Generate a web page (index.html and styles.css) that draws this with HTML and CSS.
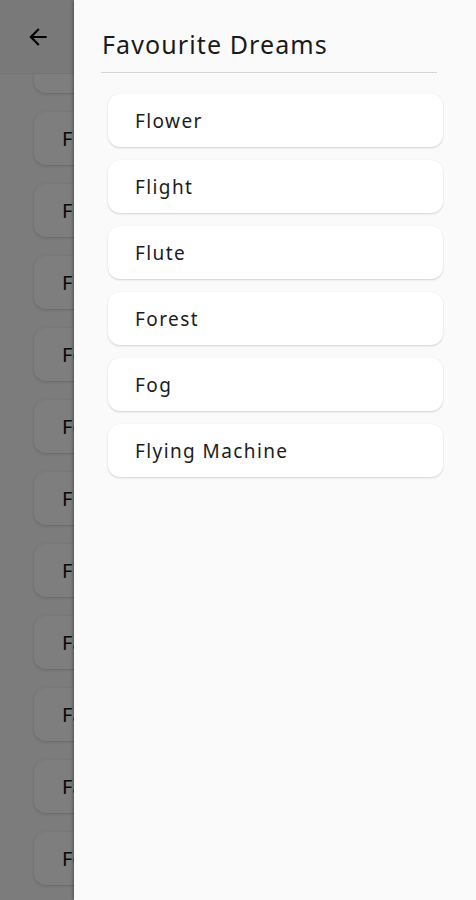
FILE: index.html
```html
<!DOCTYPE html>
<html>
<head>
<meta charset="utf-8">
<link rel="stylesheet" href="styles.css">
</head>
<body>
<div class="app">
  <header class="appbar">
    <button class="back" aria-label="Back">
      <svg width="24" height="24" viewBox="0 0 24 24"><path d="M20 11H7.83l5.59-5.59L12 4l-8 8 8 8 1.41-1.41L7.83 13H20v-2z" fill="#000"/></svg>
    </button>
  </header>
  <main class="list">
    <div class="bg-card first"></div>
    <div class="bg-card">Flower</div>
    <div class="bg-card">Flight</div>
    <div class="bg-card">Flute</div>
    <div class="bg-card">Forest</div>
    <div class="bg-card">Fog</div>
    <div class="bg-card">Flying Machine</div>
    <div class="bg-card">Fire</div>
    <div class="bg-card">Family</div>
    <div class="bg-card">Falling</div>
    <div class="bg-card">Fame</div>
    <div class="bg-card">Fear</div>
  </main>
</div>
<div class="scrim"></div>
<aside class="drawer">
  <h1 class="title">Favourite Dreams</h1>
  <div class="divider"></div>
  <ul class="favs">
    <li class="fav">Flower</li>
    <li class="fav">Flight</li>
    <li class="fav">Flute</li>
    <li class="fav">Forest</li>
    <li class="fav">Fog</li>
    <li class="fav">Flying Machine</li>
  </ul>
</aside>
</body>
</html>
```
FILE: styles.css
```css
html, body {
  margin: 0;
  padding: 0;
}
body {
  width: 476px;
  height: 900px;
  overflow: hidden;
  position: relative;
  background: #f8f8f8;
  font-family: "Noto Sans", "Lato", sans-serif;
  color: #111;
}
.app {
  display: flex;
  flex-direction: column;
  height: 900px;
}
.appbar {
  height: 73px;
  flex: none;
  display: flex;
  align-items: center;
  padding-left: 20px;
  background: #f2f2f2;
  border-bottom: 1px solid #e6e6e6;
  position: relative;
  z-index: 1;
}
.back {
  width: 36px;
  height: 36px;
  border: 0;
  background: none;
  padding: 0;
  display: flex;
  align-items: center;
  justify-content: center;
}
.back svg { width: 26px; height: 26px; }
.list {
  flex: 1;
  overflow: hidden;
  display: flex;
  flex-direction: column;
  gap: 19px;
  padding: 0 34px;
}
.bg-card {
  flex: none;
  height: 53px;
  background: #fcfcfc;
  border-radius: 12px;
  box-shadow: 0 1px 3px rgba(0,0,0,0.18);
  display: flex;
  align-items: center;
  padding-left: 28px;
  font-size: 20px;
}
.bg-card.first { margin-top: -34px; }
.scrim {
  position: absolute;
  inset: 0;
  background: rgba(0,0,0,0.5);
  z-index: 2;
}
.drawer {
  position: absolute;
  top: 0;
  bottom: 0;
  left: 74px;
  right: 0;
  z-index: 3;
  background: #fafafa;
  box-shadow: -1px 0 3px rgba(0,0,0,0.35);
  padding: 0 39px 0 27px;
  display: flex;
  flex-direction: column;
}
.title {
  margin: 28px 0 0 1px;
  font-size: 25px;
  font-weight: 400;
  line-height: 32px;
  color: #1a1a1a;
  letter-spacing: 1.1px;
  white-space: nowrap;
}
.divider {
  margin-top: 12px;
  height: 1px;
  background: #d6d6d6;
}
.favs {
  list-style: none;
  margin: 21px -6px 0 0;
  padding: 0 0 0 7px;
  display: flex;
  flex-direction: column;
  gap: 13px;
}
.fav {
  height: 53px;
  background: #fff;
  border-radius: 12px;
  box-shadow: 0 1px 2px rgba(0,0,0,0.16), 0 0 1px rgba(0,0,0,0.06);
  display: flex;
  align-items: center;
  padding-left: 27px;
  font-size: 19px;
  color: #1c1c1c;
  letter-spacing: 1.4px;
}
```
